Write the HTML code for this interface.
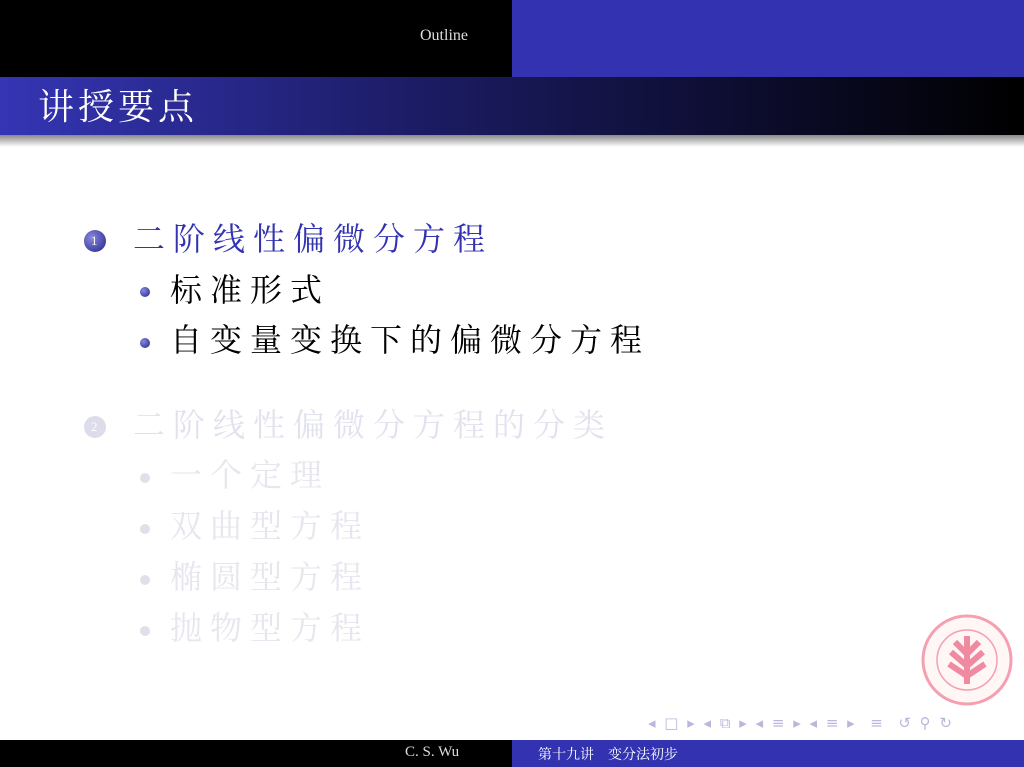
<!DOCTYPE html>
<html><head><meta charset="utf-8"><style>
body{margin:0;width:1024px;height:767px;position:relative;overflow:hidden;background:#fff;font-family:"Liberation Serif","Noto Serif CJK SC",serif}
.a{position:absolute;white-space:nowrap}
.ball{position:absolute;border-radius:50%}
.t{font-size:32px;letter-spacing:8px;line-height:1}
</style></head><body>
<div class="a" style="left:0;top:0;width:512px;height:77px;background:#000"></div>
<div class="a" style="left:512px;top:0;width:512px;height:77px;background:#3333b2"></div>
<div class="a" style="left:420px;top:27px;color:#ddd;font-size:16px">Outline</div>
<div class="a" style="left:0;top:77px;width:1024px;height:58px;background:linear-gradient(to right,#3535b5,#1c1c66 40%,#000)"></div>
<div class="a" style="left:0;top:135px;width:1024px;height:12px;background:linear-gradient(#888,#fff)"></div>
<div class="a" style="left:38px;top:89px;color:#fff;font-size:36px;letter-spacing:4px;line-height:1">讲授要点</div>

<div class="ball" style="left:84px;top:230px;width:22px;height:22px;background:radial-gradient(circle at 35% 35%,#8888dd,#222288)"></div>
<div class="a" style="left:91px;top:233px;color:#fff;font-size:13px">1</div>
<div class="a t" style="left:133px;top:223px;color:#3333b2">二阶线性偏微分方程</div>
<div class="ball" style="left:140px;top:287px;width:10px;height:10px;background:radial-gradient(circle at 35% 35%,#8888dd,#222288)"></div>
<div class="a t" style="left:170px;top:274px;color:#000">标准形式</div>
<div class="ball" style="left:140px;top:338px;width:10px;height:10px;background:radial-gradient(circle at 35% 35%,#8888dd,#222288)"></div>
<div class="a t" style="left:170px;top:324px;color:#000">自变量变换下的偏微分方程</div>

<div class="ball" style="left:84px;top:416px;width:22px;height:22px;background:#dcdcea"></div>
<div class="a" style="left:91px;top:419px;color:#fff;font-size:13px">2</div>
<div class="a t" style="left:133px;top:409px;color:#e2e2ef">二阶线性偏微分方程的分类</div>
<div class="ball" style="left:140px;top:473px;width:10px;height:10px;background:#e0e0ea"></div>
<div class="a t" style="left:170px;top:459px;color:#e6e6ee">一个定理</div>
<div class="ball" style="left:140px;top:524px;width:10px;height:10px;background:#e0e0ea"></div>
<div class="a t" style="left:170px;top:510px;color:#e6e6ee">双曲型方程</div>
<div class="ball" style="left:140px;top:575px;width:10px;height:10px;background:#e0e0ea"></div>
<div class="a t" style="left:170px;top:561px;color:#e6e6ee">椭圆型方程</div>
<div class="ball" style="left:140px;top:626px;width:10px;height:10px;background:#e0e0ea"></div>
<div class="a t" style="left:170px;top:612px;color:#e6e6ee">抛物型方程</div>

<svg class="a" style="left:921px;top:614px" width="92" height="92" viewBox="0 0 92 92">
<circle cx="46" cy="46" r="44" fill="#fff6f6" stroke="#f4a0b0" stroke-width="3"/>
<circle cx="46" cy="46" r="30" fill="none" stroke="#f4a0b0" stroke-width="1.5"/>
<path d="M46 22 L46 70 M30 38 L46 52 L62 38 M28 50 L46 62 L64 50 M34 28 L46 40 L58 28" stroke="#f08aa0" stroke-width="6" fill="none"/>
</svg>

<div class="a" style="left:648px;top:714px;color:#b8b8dc;font-size:15px;letter-spacing:2px;font-family:'DejaVu Sans',sans-serif">◂ □ ▸ ◂ ⧉ ▸ ◂ ≡ ▸ ◂ ≡ ▸ &nbsp;≡ &nbsp;↺ ⚲ ↻</div>

<div class="a" style="left:0;top:740px;width:512px;height:27px;background:#000"></div>
<div class="a" style="left:512px;top:740px;width:512px;height:27px;background:#3333b2"></div>
<div class="a" style="left:405px;top:744px;color:#ddd;font-size:15px">C. S. Wu</div>
<div class="a" style="left:538px;top:744px;color:#fff;font-size:14px">第十九讲　变分法初步</div>
</body></html>
